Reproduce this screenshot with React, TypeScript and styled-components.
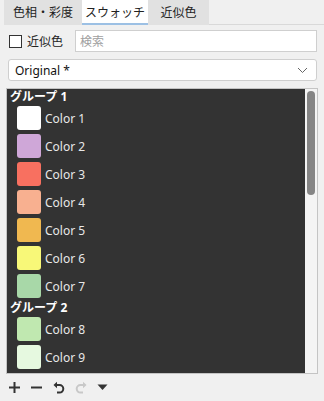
import React from 'react';
import styled, { createGlobalStyle } from 'styled-components';

interface Swatch {
  name: string;
  color: string;
}

interface Group {
  title: string;
  items: Swatch[];
}

const groups: Group[] = [
  {
    title: 'グループ 1',
    items: [
      { name: 'Color 1', color: '#ffffff' },
      { name: 'Color 2', color: '#cfa7d8' },
      { name: 'Color 3', color: '#f87060' },
      { name: 'Color 4', color: '#f8b090' },
      { name: 'Color 5', color: '#f0b850' },
      { name: 'Color 6', color: '#f8f878' },
      { name: 'Color 7', color: '#a8d8a8' },
    ],
  },
  {
    title: 'グループ 2',
    items: [
      { name: 'Color 8', color: '#c0e8b0' },
      { name: 'Color 9', color: '#e6f9e0' },
    ],
  },
];

const tabs = [
  { label: '色相・彩度', width: 78 },
  { label: 'スウォッチ', width: 66 },
  { label: '近似色', width: 61 },
];

const App = () => {
  return (
    <Page>
      <GlobalStyle />
      <TabBar>
        {tabs.map((tab, index) => (
          <Tab key={tab.label} width={tab.width} active={index === 1}>
            {tab.label}
          </Tab>
        ))}
      </TabBar>

      <FilterRow>
        <CheckLabel>
          <CheckBox />
          近似色
        </CheckLabel>
        <SearchBox>検索</SearchBox>
      </FilterRow>

      <Select>
        <span>Original *</span>
        <svg width='11' height='7' viewBox='0 0 11 7'>
          <path d='M1 1 L5.5 5.5 L10 1' fill='none' stroke='#666' strokeWidth='1' />
        </svg>
      </Select>

      <ListFrame>
        <List>
          {groups.map(group => (
            <div key={group.title}>
              <GroupTitle>{group.title}</GroupTitle>
              {group.items.map(item => (
                <Item key={item.name}>
                  <Chip color={item.color} />
                  {item.name}
                </Item>
              ))}
            </div>
          ))}
        </List>
        <ScrollTrack>
          <ScrollThumb />
        </ScrollTrack>
      </ListFrame>

      <Toolbar>
        <ToolButton>
          <svg width='13' height='13' viewBox='0 0 13 13'>
            <path d='M6.5 1 V12 M1 6.5 H12' stroke='#333' strokeWidth='2' />
          </svg>
        </ToolButton>
        <ToolButton>
          <svg width='13' height='13' viewBox='0 0 13 13'>
            <path d='M1 6.5 H12' stroke='#333' strokeWidth='2' />
          </svg>
        </ToolButton>
        <ToolButton>
          <svg width='12' height='13' viewBox='0 0 12 13'>
            <path d='M3 4 H6.5 A3.8 3.8 0 0 1 6.5 11.6 H4' fill='none' stroke='#333' strokeWidth='2' />
            <path d='M0.5 4 L4 0.8 V7.2 Z' fill='#333' />
          </svg>
        </ToolButton>
        <ToolButton>
          <svg width='12' height='13' viewBox='0 0 12 13'>
            <path d='M9 4 H5.5 A3.8 3.8 0 0 0 5.5 11.6 H8' fill='none' stroke='#c8c8c8' strokeWidth='2' />
            <path d='M11.5 4 L8 0.8 V7.2 Z' fill='#c8c8c8' />
          </svg>
        </ToolButton>
        <ToolButton>
          <svg width='11' height='7' viewBox='0 0 11 7'>
            <path d='M0.5 0.5 H10.5 L5.5 6 Z' fill='#333' />
          </svg>
        </ToolButton>
      </Toolbar>
    </Page>
  );
};

export default App;

const GlobalStyle = createGlobalStyle`
  html, body {
    margin: 0;
    padding: 0;
    background: #f0f0f0;
  }
  body {
    font-family: "Noto Sans", "Noto Sans CJK JP", sans-serif;
    font-size: 12px;
    color: #222;
  }
`;

const Page = styled.div`
  width: 324px;
  height: 401px;
  overflow: hidden;
  display: flex;
  flex-direction: column;
`;

const TabBar = styled.div`
  display: flex;
  height: 25px;
  margin-left: 4px;
  border-bottom: 1px solid #d9d9d9;
  box-sizing: border-box;
`;

interface TabProps {
  width: number;
  active: boolean;
}

const Tab = styled.div<TabProps>`
  width: ${props => props.width}px;
  display: flex;
  align-items: center;
  justify-content: center;
  box-sizing: border-box;
  background: ${props => (props.active ? '#ffffff' : '#e1e1e1')};
  border-bottom: 2px solid ${props => (props.active ? '#9cc0e4' : 'transparent')};
  margin-bottom: -1px;
  padding-top: 1px;
`;

const FilterRow = styled.div`
  display: flex;
  align-items: center;
  margin: 5px 7px 0 9px;
  height: 22px;
`;

const CheckLabel = styled.label`
  display: flex;
  align-items: center;
  gap: 5px;
  width: 66px;
`;

const CheckBox = styled.span`
  width: 13px;
  height: 13px;
  box-sizing: border-box;
  border: 1px solid #333;
  background: #fff;
`;

const SearchBox = styled.div`
  flex: 1;
  height: 22px;
  box-sizing: border-box;
  border: 1px solid #cfcfcf;
  background: #fff;
  color: #a0a0a0;
  display: flex;
  align-items: center;
  padding-left: 4px;
`;

const Select = styled.div`
  display: flex;
  align-items: center;
  justify-content: space-between;
  margin: 7px 7px 0 8px;
  height: 22px;
  box-sizing: border-box;
  border: 1px solid #cfcfcf;
  border-radius: 3px;
  background: #fff;
  padding: 0 8px 0 6px;
  color: #111;
`;

const ListFrame = styled.div`
  display: flex;
  margin: 7px 6px 0 6px;
  height: 286px;
  box-sizing: border-box;
  border: 1px solid #c4c4c4;
`;

const List = styled.div`
  flex: 1;
  background: #333333;
  color: #ffffff;
  overflow: hidden;
  padding-left: 3px;
`;

const GroupTitle = styled.div`
  height: 15px;
  line-height: 15px;
  font-weight: bold;
`;

const Item = styled.div`
  display: flex;
  align-items: center;
  gap: 4px;
  height: 28px;
  padding-left: 7px;
  color: #e8e8e8;
`;

const Chip = styled.span<{ color: string }>`
  width: 24px;
  height: 24px;
  border-radius: 3px;
  background: ${props => props.color};
`;

const ScrollTrack = styled.div`
  width: 12px;
  background: #f4f4f4;
  padding: 2px 2px 0 2px;
  box-sizing: border-box;
`;

const ScrollThumb = styled.div`
  width: 8px;
  height: 104px;
  border-radius: 4px;
  background: #858585;
`;

const Toolbar = styled.div`
  display: flex;
  align-items: center;
  height: 26px;
  padding-left: 8px;
  gap: 9px;
`;

const ToolButton = styled.span`
  width: 13px;
  height: 18px;
  display: flex;
  align-items: center;
  justify-content: center;
`;
